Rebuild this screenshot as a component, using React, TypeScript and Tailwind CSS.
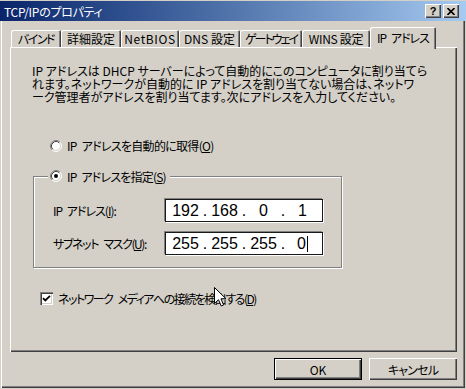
import React from "react";

const raised =
  "shadow-[inset_1px_1px_#ffffff,inset_-1px_-1px_#404040,inset_-2px_-2px_#808080]";
const sunken =
  "shadow-[inset_1px_1px_#808080,inset_2px_2px_#404040,inset_-1px_-1px_#ffffff,inset_-2px_-2px_#d4d0c8]";

function Radio({ checked }: { checked?: boolean }) {
  return (
    <svg width="12" height="12" viewBox="0 0 12 12" className="shrink-0">
      <circle cx="6" cy="6" r="5" fill="#ffffff" />
      <path d="M2.11 9.89 A5.5 5.5 0 0 1 9.89 2.11" fill="none" stroke="#808080" strokeWidth="1" />
      <path d="M9.89 2.11 A5.5 5.5 0 0 1 2.11 9.89" fill="none" stroke="#ffffff" strokeWidth="1" />
      <path d="M2.82 9.18 A4.5 4.5 0 0 1 9.18 2.82" fill="none" stroke="#404040" strokeWidth="1" />
      <path d="M9.18 2.82 A4.5 4.5 0 0 1 2.82 9.18" fill="none" stroke="#d4d0c8" strokeWidth="1" />
      {checked && <circle cx="6" cy="6" r="2" fill="#000000" />}
    </svg>
  );
}

function Tab({ label, w, track }: { label: string; w: string; track: string }) {
  return (
    <div
      className={`${w} h-[17px] flex items-center justify-center shrink-0 shadow-[inset_1px_1px_#ffffff,inset_-1px_0_#404040,inset_-2px_0_#808080] rounded-tl-[2px] rounded-tr-[2px]`}
    >
      <span className={`whitespace-nowrap ${track}`}>{label}</span>
    </div>
  );
}

function Octets({ values, caret }: { values: string[]; caret?: boolean }) {
  return (
    <div className="w-[158px] h-[23px] bg-white border border-[#1a1a1a] shadow-[-1px_-1px_#808080,1px_1px_#ffffff] flex items-center pl-[5px] font-['Liberation_Sans',sans-serif] text-[16px] leading-[18px] [font-feature-settings:normal]">
      {values.map((v, i) => (
        <React.Fragment key={i}>
          <div className="w-[29px] flex justify-center items-center">
            <span>{v}</span>
            {caret && i === 3 && <span className="w-[1px] h-[16px] bg-black ml-[1px]" />}
          </div>
          {i < 3 && <div className="w-[10px] flex justify-center">.</div>}
        </React.Fragment>
      ))}
    </div>
  );
}

export default function App() {
  return (
    <div className="relative w-[466px] h-[389px] bg-[#d4d0c8] flex flex-col overflow-hidden text-black text-[12px] leading-[13px] font-['Noto_Sans_CJK_JP','Noto_Sans',sans-serif] [font-feature-settings:'palt']">
      {/* Title bar */}
      <div className="mt-[1px] h-[20px] shrink-0 flex items-center bg-gradient-to-r from-[#0a246a] to-[#a6caf0] pl-[4px] pr-[7px]">
        <span className="flex-1 text-white text-[12px] whitespace-nowrap tracking-[-0.3px]">TCP/IPのプロパティ</span>
        <div className="flex gap-[2px]">
          <div className={`w-[16px] h-[14px] bg-[#d4d0c8] ${raised} flex items-center justify-center`}>
            <span className="font-['Liberation_Sans',sans-serif] font-bold text-[11px] leading-[11px]">?</span>
          </div>
          <div className={`w-[16px] h-[14px] bg-[#d4d0c8] ${raised} flex items-center justify-center`}>
            <svg width="8" height="7" viewBox="0 0 8 7">
              <path d="M0.5 0 L7.5 7 M7.5 0 L0.5 7" stroke="#000" strokeWidth="1.6" />
            </svg>
          </div>
        </div>
      </div>

      {/* Body */}
      <div className="flex-1 mx-[1px] mb-[1px] flex flex-col pl-[9px] shadow-[inset_1px_0_#ffffff,inset_-1px_-1px_#404040,inset_-2px_-2px_#808080]">
        {/* Tabs */}
        <div className="mt-[6px] h-[20px] flex items-end pl-[1px]">
          <Tab label="バインド" w="w-[50px]" track="tracking-[-1.5px]" />
          <Tab label="詳細設定" w="w-[60px]" track="tracking-[0px]" />
          <Tab label="NetBIOS" w="w-[58px]" track="tracking-[0.6px]" />
          <Tab label="DNS 設定" w="w-[61px]" track="tracking-[0px]" />
          <Tab label="ゲートウェイ" w="w-[62px]" track="tracking-[-2px]" />
          <Tab label="WINS 設定" w="w-[68px]" track="tracking-[-0.3px]" />
          <div className="relative z-10 w-[66px] h-[22px] -mb-[2px] bg-[#d4d0c8] flex justify-center pt-[4px] shrink-0 shadow-[inset_1px_1px_#ffffff,inset_-1px_0_#404040,inset_-2px_0_#808080] rounded-tl-[2px] rounded-tr-[2px]">
            <span className="whitespace-nowrap tracking-[-1px] [word-spacing:3px]">IP アドレス</span>
          </div>
        </div>

        {/* Panel */}
        <div className="w-[447px] h-[305px] flex flex-col pl-[22px] pt-[17px] shadow-[inset_1px_1px_#ffffff,inset_-1px_-1px_#404040,inset_-2px_-2px_#808080]">
          <p className="leading-[13px] whitespace-nowrap">
            IP アドレスは DHCP サーバーによって自動的にこのコンピュータに割り当てら
            <br />
            れます。ネットワークが自動的に IP アドレスを割り当てない場合は、ネットワ
            <br />
            ーク管理者がアドレスを割り当てます。次にアドレスを入力してください。
          </p>

          <div className="mt-[36px] ml-[18px] h-[13px] flex items-center gap-[5px]">
            <Radio />
            <span className="whitespace-nowrap tracking-[-0.7px] [word-spacing:3px]">
              IP アドレスを自動的に取得(<u>O</u>)
            </span>
          </div>

          <fieldset className="mt-[17px] ml-[1px] w-[309px] border border-[#808080] shadow-[inset_1px_1px_#ffffff,1px_1px_#ffffff] pl-[14px] pb-[12px]">
            <legend className="pl-[2px] pr-[4px] h-[14px] bg-[#d4d0c8] relative">
              <div className="flex items-center gap-[5px] h-[14px]">
                <Radio checked />
                <span className="whitespace-nowrap tracking-[-0.8px] [word-spacing:3px]">
                  IP アドレスを指定(<u>S</u>)
                </span>
              </div>
            </legend>
            <div className="flex flex-col gap-[10px] mt-[16px] pl-[5px]">
              <div className="flex items-center">
                <span className="w-[112px] whitespace-nowrap tracking-[-1px] [word-spacing:3px]">
                  IP アドレス(<u>I</u>):
                </span>
                <Octets values={["192", "168", "0", "1"]} />
              </div>
              <div className="flex items-center">
                <span className="w-[112px] whitespace-nowrap tracking-[-1.4px] [word-spacing:4px]">
                  サブネット マスク(<u>U</u>):
                </span>
                <Octets values={["255", "255", "255", "0"]} caret />
              </div>
            </div>
          </fieldset>

          <div className="mt-[24px] ml-[8px] h-[13px] flex items-center gap-[5px]">
            <div className={`w-[13px] h-[13px] bg-white ${sunken} flex items-center justify-center shrink-0`}>
              <svg width="9" height="9" viewBox="0 0 9 9">
                <path d="M1 4.2 L3.3 6.5 L8 1.8" fill="none" stroke="#000" strokeWidth="1.8" />
              </svg>
            </div>
            <span className="whitespace-nowrap tracking-[-1.5px] [word-spacing:4px]">
              ネットワーク メディアへの接続を検出する(<u>D</u>)
            </span>
          </div>
        </div>

        {/* Buttons */}
        <div className="mt-[6px] w-[447px] flex justify-end gap-[7px]">
          <button className={`w-[88px] h-[22px] bg-[#d4d0c8] border border-black ${raised} flex items-center justify-center`}>
            OK
          </button>
          <button className={`w-[88px] h-[22px] bg-[#d4d0c8] ${raised} flex items-center justify-center tracking-[-0.8px]`}>
            キャンセル
          </button>
        </div>
      </div>

      {/* Mouse cursor */}
      <svg
        className="absolute left-[214px] top-[287px]"
        width="13"
        height="21"
        viewBox="0 0 13 21"
      >
        <path
          d="M0.5 0.5 L0.5 16.5 L4.5 12.7 L7.2 19 L9.6 18 L7 11.8 L12 11.8 Z"
          fill="#ffffff"
          stroke="#000000"
          strokeWidth="1"
          strokeLinejoin="miter"
        />
      </svg>
    </div>
  );
}
